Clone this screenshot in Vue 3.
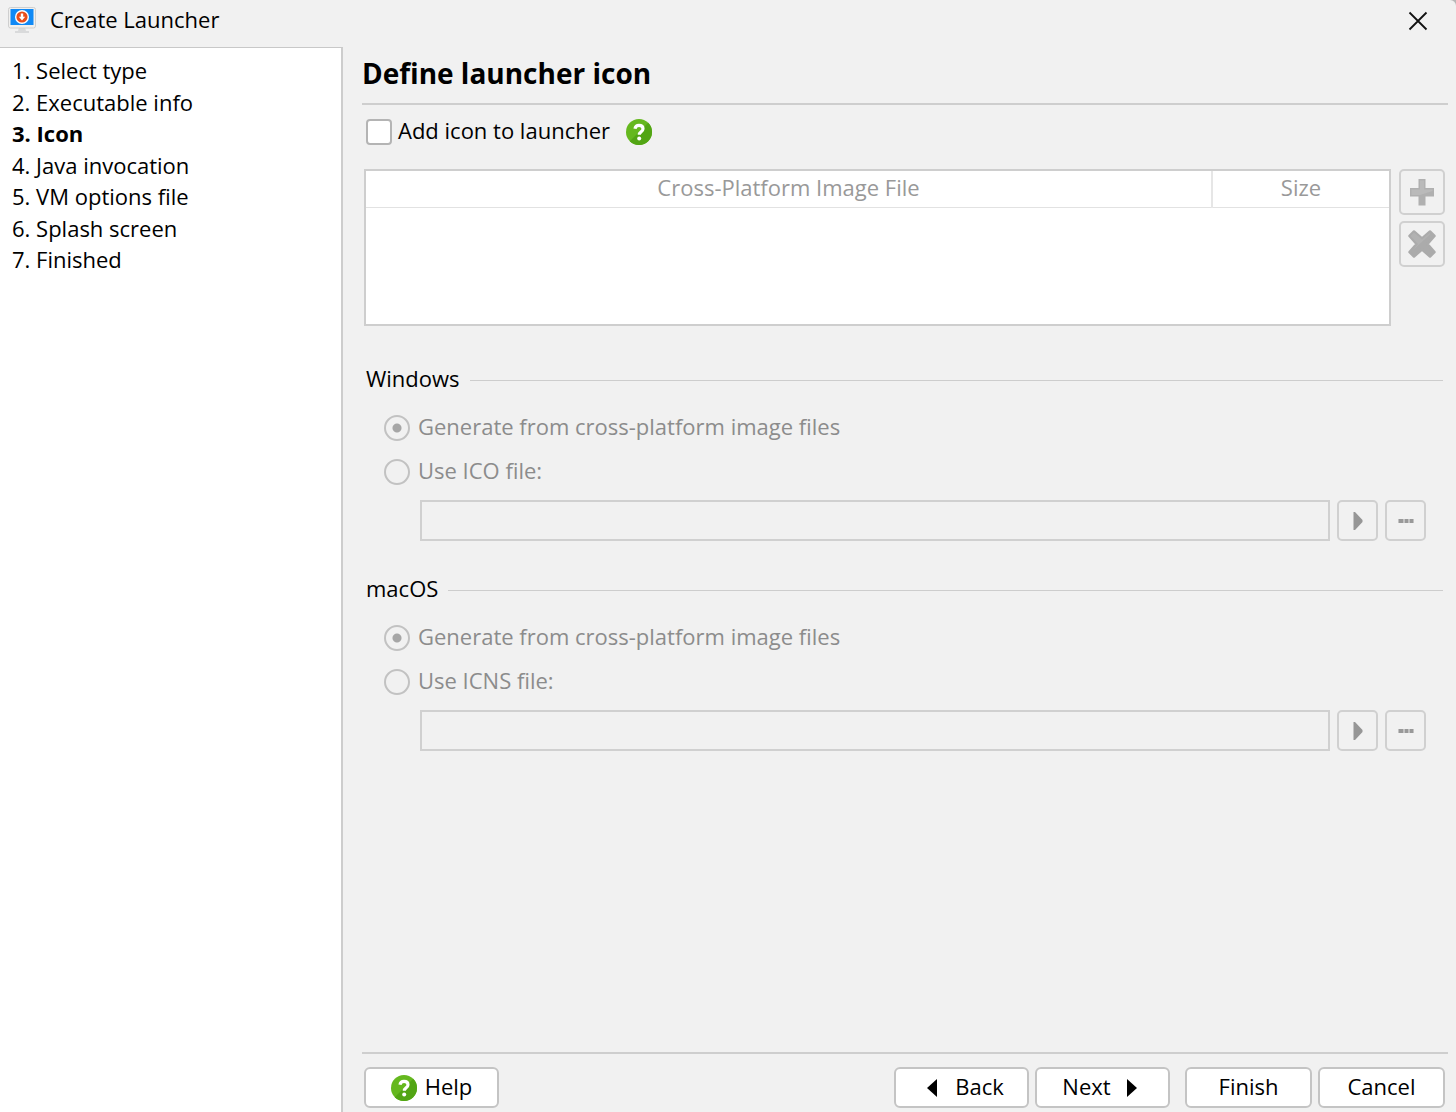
<script setup>
import { ref } from 'vue'

const steps = ['Select type', 'Executable info', 'Icon', 'Java invocation', 'VM options file', 'Splash screen', 'Finished']
const current = 2

const addIcon = ref(false)
const platforms = ref([
  { id: 'windows', name: 'Windows', fileLabel: 'Use ICO file:', mode: 'generate', path: '' },
  { id: 'macos', name: 'macOS', fileLabel: 'Use ICNS file:', mode: 'generate', path: '' },
])
</script>

<template>
  <div class="window">
    <header class="titlebar">
      <svg class="app-icon" width="28" height="28" viewBox="0 0 28 28" aria-hidden="true">
        <path d="M11 20h6l1 4h3v2H7v-2h3z" fill="#d9dadb" />
        <rect x="0.5" y="0.5" width="27" height="20.500" rx="2" fill="#f1f0ee" stroke="#cfcfcf" />
        <rect x="2.500" y="2" width="23" height="16" fill="#1089f5" />
        <circle cx="14" cy="10" r="7" fill="#fff" />
        <circle cx="14" cy="10" r="5.600" fill="#e94e1b" />
        <path d="M12.800 6.500h2.400v3.300h2L14 13.600l-3.200-3.800h2z" fill="#fff" />
      </svg>
      <span class="text">Create Launcher</span>
      <button class="close" type="button" aria-label="Close">
        <svg width="20" height="20" viewBox="0 0 20 20"><path d="M1.500 1.500l17 17M18.500 1.500l-17 17" stroke="#111" stroke-width="1.800" /></svg>
      </button>
    </header>

    <div class="body">
      <nav class="sidebar">
        <ol class="steps">
          <li v-for="(step, i) in steps" :key="step" :class="{ active: i === current }">{{ i + 1 }}. {{ step }}</li>
        </ol>
      </nav>

      <main class="main">
        <h1>Define launcher icon</h1>

        <div class="toggle">
          <input id="add-icon" v-model="addIcon" type="checkbox" />
          <label class="text" for="add-icon">Add icon to launcher</label>
          <button class="info" type="button" aria-label="Show help">
            <svg width="26" height="26" viewBox="0 0 26 26">
              <circle cx="13" cy="13" r="13" fill="#65b81e" />
              <path d="M22.200 3.800A13 13 0 0 1 3.800 22.200z" fill="#52a514" />
              <path d="M9 9.800c.3-2.400 1.900-3.500 4-3.500 2.400 0 4 1.300 4 3.400 0 3.200-3.700 3-3.700 6.100" fill="none" stroke="#fff" stroke-width="3.200" />
              <circle cx="13.200" cy="19.500" r="2" fill="#fff" />
            </svg>
          </button>
        </div>

        <div class="images">
          <div class="table-box">
            <table>
              <thead>
                <tr>
                  <th scope="col">Cross-Platform Image File</th>
                  <th scope="col" class="size">Size</th>
                </tr>
              </thead>
            </table>
          </div>
          <div class="tools">
            <button class="tool" type="button" disabled aria-label="Add image">
              <svg width="28" height="28" viewBox="0 0 28 28">
                <path d="M10.500 1h7v9H26v8.500h-8.500v9h-7v-9H2V10h8.500z" fill="#b0b0b0" />
                <path d="M12 2.500h4.200v9h8.300v1.500L12 17H3.500v-5.500H12z" fill="#bababa" />
              </svg>
            </button>
            <button class="tool" type="button" disabled aria-label="Remove image">
              <svg width="28" height="28" viewBox="0 0 28 28">
                <path d="M6 1.500l8 7 8-7L26.500 6l-7 8 7 8-4.500 4.500-8-7-8 7L1.500 22l7-8-7-8z" fill="#ababab" stroke="#ababab" stroke-width="2.500" stroke-linejoin="round" />
                <path d="M6 2.500l8 7 7.500-6.500 1 1L4 21l6-7-7.500-8z" fill="#b2b2b2" />
              </svg>
            </button>
          </div>
        </div>

        <fieldset v-for="p in platforms" :key="p.id" class="platform" :aria-labelledby="p.id + '-name'" :disabled="!addIcon">
          <div class="group-title"><span :id="p.id + '-name'" class="text">{{ p.name }}</span></div>
          <div class="option">
            <input :id="p.id + '-generate'" v-model="p.mode" type="radio" :name="p.id" value="generate" />
            <label class="text" :for="p.id + '-generate'">Generate from cross-platform image files</label>
          </div>
          <div class="option">
            <input :id="p.id + '-file'" v-model="p.mode" type="radio" :name="p.id" value="file" />
            <label :id="p.id + '-file-label'" class="text" :for="p.id + '-file'">{{ p.fileLabel }}</label>
          </div>
          <div class="file">
            <input v-model="p.path" class="path" type="text" :aria-labelledby="p.id + '-file-label'" />
            <button class="mini" type="button" aria-label="Insert variable">
              <svg width="10" height="18" viewBox="0 0 10 18"><path d="M0.500 0h1.500l7.500 8v2L2 18H0.500z" fill="#969696" /></svg>
            </button>
            <button class="mini" type="button" aria-label="Browse">
              <svg width="16" height="4" viewBox="0 0 16 4"><path d="M0 0h16v4H0z" fill="#c2c2c2" /><path d="M1 0h4v4H1zM7 0h3v4H7zM12 0h3v4h-3z" fill="#999" /></svg>
            </button>
          </div>
        </fieldset>

        <footer class="footer">
          <button class="btn wide help" type="button">
            <svg width="26" height="26" viewBox="0 0 26 26">
              <circle cx="13" cy="13" r="13" fill="#65b81e" />
              <path d="M22.200 3.800A13 13 0 0 1 3.800 22.200z" fill="#52a514" />
              <path d="M9 9.800c.3-2.400 1.900-3.500 4-3.500 2.400 0 4 1.300 4 3.400 0 3.200-3.700 3-3.700 6.100" fill="none" stroke="#fff" stroke-width="3.200" />
              <circle cx="13.200" cy="19.500" r="2" fill="#fff" />
            </svg>
            <span class="text">Help</span>
          </button>
          <button class="btn wide back" type="button">
            <svg width="10" height="18" viewBox="0 0 10 18"><path d="M10 0v18L0 9z" /></svg>
            <span class="text">Back</span>
          </button>
          <button class="btn wide next" type="button">
            <span class="text">Next</span>
            <svg width="10" height="18" viewBox="0 0 10 18"><path d="M0 0v18l10-9z" /></svg>
          </button>
          <button class="btn finish" type="button"><span class="text">Finish</span></button>
          <button class="btn" type="button"><span class="text">Cancel</span></button>
        </footer>
      </main>
    </div>
  </div>
</template>

<style>
body {
  margin: 0;
  background: #b8b8b8;
}
</style>

<style scoped>
* {
  box-sizing: border-box;
}
.window {
  display: flex;
  flex-direction: column;
  min-height: 100vh;
  background: #f1f1f1;
  border-top-right-radius: 6px;
  color: #000;
  font: 22px/32px "Open Sans", "Noto Sans", sans-serif;
}
button,
input {
  margin: 0;
  padding: 0;
  font: inherit;
  color: inherit;
}
svg {
  display: block;
  flex: none;
}
.text {
  padding-bottom: 3px;
  line-height: 29px;
}
.titlebar {
  display: flex;
  align-items: center;
  height: 47px;
  padding: 0 26px 6px 8px;
}
.app-icon {
  margin-right: 14px;
}
.close {
  margin-left: auto;
  padding: 2px;
  border: 0;
  background: none;
}
.body {
  display: flex;
  flex: 1;
}
.sidebar {
  flex: none;
  width: 343px;
  border-top: 1px solid #c8c8c8;
  border-right: 2px solid #cdcdcd;
  background: #fff;
}
.steps {
  margin: 0;
  padding: 6px 12px;
  list-style: none;
}
.steps li {
  height: 32px;
}
.steps li:nth-child(even) {
  height: 31px;
}
.steps .active {
  font-weight: 700;
}
.main {
  display: flex;
  flex: 1;
  flex-direction: column;
  min-width: 0;
  padding: 0 8px 0 19px;
}
h1 {
  height: 58px;
  margin: 0;
  padding-top: 9px;
  border-bottom: 2px solid #cecece;
  font-size: 28px;
  line-height: 34px;
}
.toggle {
  display: flex;
  align-items: center;
  height: 32px;
  margin: 11px 0 21px 4px;
}
input[type="checkbox"] {
  appearance: none;
  width: 26px;
  height: 26px;
  margin-right: 6px;
  border: 2px solid #b4b4b4;
  border-radius: 4px;
  background: #fff;
}
input[type="checkbox"]:checked {
  background: #3c83c5;
}
.info {
  margin-left: 16px;
  border: 0;
  background: none;
}
.images {
  display: flex;
  gap: 8px;
  margin: 0 3px 0 2px;
}
.table-box {
  flex: 1;
  height: 157px;
  border: 2px solid #cecece;
  background: #fff;
}
table {
  width: 100%;
  border-collapse: collapse;
  table-layout: fixed;
}
th {
  height: 36px;
  padding: 0 0 3px;
  border-bottom: 1px solid #e2e2e2;
  color: #999;
  font-weight: 400;
}
.size {
  width: 177px;
  border-left: 2px solid #e6e6e6;
}
.tools {
  display: flex;
  flex-direction: column;
  gap: 6px;
}
.tool,
.mini {
  display: flex;
  align-items: center;
  justify-content: center;
  border: 2px solid #d0d0d0;
  border-radius: 5px;
  background: #f1f1f1;
}
.tool {
  width: 46px;
  height: 46px;
}
.platform {
  min-width: 0;
  margin: 0 5px 0 4px;
  padding: 0;
  border: 0;
  color: #8c8c8c;
}
.images + .platform {
  margin-top: 38px;
}
.platform + .platform {
  margin-top: 33px;
}
.group-title {
  display: flex;
  align-items: center;
  gap: 10px;
  margin-bottom: 16px;
  color: #000;
}
.group-title::after {
  flex: 1;
  height: 1px;
  background: #cdcdcd;
  content: "";
}
.option {
  display: flex;
  align-items: center;
  height: 32px;
  margin: 0 0 12px 18px;
}
input[type="radio"] {
  appearance: none;
  width: 26px;
  height: 26px;
  margin-right: 8px;
  border: 2px solid #c2c2c2;
  border-radius: 50%;
}
input[type="radio"]:checked {
  background: radial-gradient(circle, #a6a6a6 4px, transparent 5px);
}
.file {
  display: flex;
  gap: 7px;
  margin: 0 17px 0 54px;
}
.path {
  flex: 1;
  min-width: 0;
  height: 41px;
  padding: 0 8px;
  border: 2px solid #d0d0d0;
  background: #f1f1f1;
}
.mini {
  width: 41px;
  height: 41px;
}
.footer {
  display: flex;
  gap: 6px;
  height: 60px;
  margin-top: auto;
  padding: 13px 3px 0 2px;
  border-top: 2px solid #cecece;
}
.btn {
  display: flex;
  align-items: center;
  justify-content: center;
  width: 127px;
  height: 41px;
  border: 2px solid #c4c4c4;
  border-radius: 6px;
  background: #fff;
}
.wide {
  width: 135px;
}
.help {
  gap: 8px;
  margin-right: auto;
}
.back {
  gap: 18px;
  padding-left: 8px;
}
.next {
  gap: 16px;
  padding-right: 6px;
}
.finish {
  margin-left: 9px;
}
</style>
